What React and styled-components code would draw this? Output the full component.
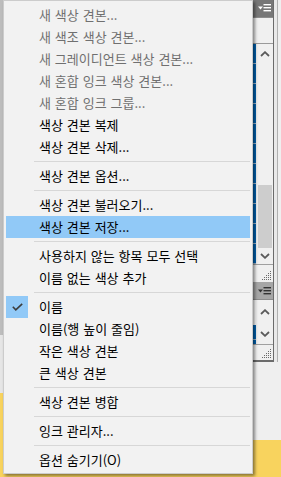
import styled, { createGlobalStyle } from 'styled-components'

const GlobalStyle = createGlobalStyle`
  html, body { margin: 0; padding: 0; }
  body { font-family: "Noto Sans CJK KR", "Noto Sans", sans-serif; }
`

const menuItems = [
  { label: '새 색상 견본...', disabled: true },
  { label: '새 색조 색상 견본...', disabled: true },
  { label: '새 그레이디언트 색상 견본...', disabled: true },
  { label: '새 혼합 잉크 색상 견본...', disabled: true },
  { label: '새 혼합 잉크 그룹...', disabled: true },
  { label: '색상 견본 복제' },
  { label: '색상 견본 삭제...' },
  { sep: true },
  { label: '색상 견본 옵션...' },
  { sep: true },
  { label: '색상 견본 불러오기...' },
  { label: '색상 견본 저장...', active: true },
  { sep: true },
  { label: '사용하지 않는 항목 모두 선택' },
  { label: '이름 없는 색상 추가' },
  { sep: true },
  { label: '이름', checked: true },
  { label: '이름(행 높이 줄임)' },
  { label: '작은 색상 견본' },
  { label: '큰 색상 견본' },
  { sep: true },
  { label: '색상 견본 병합' },
  { sep: true },
  { label: '잉크 관리자...' },
  { sep: true },
  { label: '옵션 숨기기(O)' },
]

const PanelMenuIcon = ({ color }) => (
  <svg width="13" height="8" viewBox="0 0 13 8">
    <path d="M0 2.5 H5 L2.5 5.5 Z" fill={color} />
    <rect x="5.5" y="0" width="7.5" height="1.4" fill={color} />
    <rect x="5.5" y="3" width="7.5" height="1.4" fill={color} />
    <rect x="5.5" y="6" width="7.5" height="1.4" fill={color} />
  </svg>
)

const Chevron = ({ up }) => (
  <svg width="10" height="6" viewBox="0 0 10 6">
    <polyline
      points={up ? '1,5 5,1.2 9,5' : '1,1 5,4.8 9,1'}
      fill="none"
      stroke="#5a5a5a"
      strokeWidth="1.8"
    />
  </svg>
)

const Grip = () => (
  <svg width="10" height="9" viewBox="0 0 10 9">
    {[[8, 0], [6, 2], [8, 2], [4, 4], [6, 4], [8, 4], [2, 6], [4, 6], [6, 6], [8, 6], [0, 8], [2, 8], [4, 8], [6, 8], [8, 8]].map(([x, y]) => (
      <rect key={`${x}-${y}`} x={x} y={y} width="1" height="1" fill="#6a6a6a" />
    ))}
  </svg>
)

const Check = () => (
  <svg width="11" height="8" viewBox="0 0 11 8">
    <polyline points="0.8,3.8 3.8,6.8 10.2,0.8" fill="none" stroke="#3c3c3c" strokeWidth="1.6" />
  </svg>
)

const App = () => {
  return (
    <>
      <GlobalStyle />
      <Desk>
        <Side>
          <Slab $h={335} $bg="#bdbdbd" />
          <Slab $h={58} $bg="#e6e6e6" />
          <Slab $bg="#f8d35e" />
        </Side>

        <Side>
          <PanelFrame>
            <PanelStack>
              <PanelHeader $bg="#777777">
                <PanelMenuIcon color="#ffffff" />
              </PanelHeader>
              <TopControls />
              <ListPane $h={221}>
                <SwatchStrip $whiteTop={0} />
                <ScrollCol>
                  <ScrollBtn $h={20}><Chevron up /></ScrollBtn>
                  <Track $thumb={63} />
                  <ScrollBtn $h={16}><Chevron /></ScrollBtn>
                </ScrollCol>
              </ListPane>
              <GripBar $h={18}><Grip /></GripBar>
              <PanelHeader $bg="#a6a6a6">
                <PanelMenuIcon color="#333333" />
              </PanelHeader>
              <ListPane $h={44}>
                <SwatchStrip $whiteTop={25} />
                <ScrollCol>
                  <ScrollBtn $h={24}><Chevron up /></ScrollBtn>
                  <ScrollBtn $h={20}><Chevron /></ScrollBtn>
                </ScrollCol>
              </ListPane>
              <GripBar $h={16}><Grip /></GripBar>
            </PanelStack>
            <Rule $c="#6b6b6b" />
            <Rule $c="#e9e9e9" $w={3} />
            <Rule $c="#b0b0b0" />
            <Rule $c="#efefef" $w={3} />
          </PanelFrame>
          <Slab $h={78} $bg="#efefef" />
          <Slab $bg="#f8d35e" />
        </Side>

        <Menu>
          {menuItems.map((item, i) =>
            item.sep ? (
              <Separator key={i} />
            ) : (
              <Item key={i} $disabled={item.disabled} $active={item.active}>
                <CheckCell $on={item.checked}>{item.checked && <Check />}</CheckCell>
                <Label>{item.label}</Label>
              </Item>
            )
          )}
        </Menu>
      </Desk>
    </>
  )
}

export default App

const Desk = styled.div`
  position: relative;
  width: 281px;
  height: 477px;
  overflow: hidden;
  display: grid;
  grid-template-columns: 253px 28px;
`

const Side = styled.div`
  display: flex;
  flex-direction: column;
`

const Slab = styled.div`
  height: ${p => (p.$h ? `${p.$h}px` : 'auto')};
  flex: ${p => (p.$h ? 'none' : 1)};
  background: ${p => p.$bg};
`

const PanelFrame = styled.div`
  height: 362px;
  display: flex;
`

const PanelStack = styled.div`
  width: 20px;
  display: flex;
  flex-direction: column;
  background: #f0f0f0;
  border-bottom: 2px solid #6b6b6b;
`

const Rule = styled.div`
  width: ${p => p.$w || 1}px;
  background: ${p => p.$c};
`

const PanelHeader = styled.div`
  height: 17px;
  background: ${p => p.$bg};
  border-bottom: 1px solid #8c8c8c;
  display: flex;
  align-items: center;
  justify-content: center;
  padding-left: 2px;
`

const TopControls = styled.div`
  height: 25px;
  background: #f0f0f0;
  border-bottom: 1px solid #9a9a9a;
`

const ListPane = styled.div`
  height: ${p => p.$h}px;
  display: grid;
  grid-template-columns: 3px 17px;
`

const SwatchStrip = styled.div`
  background:
    linear-gradient(#ffffff, #ffffff) top / 100% ${p => p.$whiteTop}px no-repeat,
    repeating-linear-gradient(#0062b0 0 19px, #9fb8d0 19px 20px);
`

const ScrollCol = styled.div`
  display: flex;
  flex-direction: column;
  background: #f0f0f0;
`

const ScrollBtn = styled.div`
  height: ${p => p.$h}px;
  display: flex;
  align-items: center;
  justify-content: center;
`

const Track = styled.div`
  flex: 1;
  display: flex;
  flex-direction: column;
  justify-content: flex-end;
  padding: 0 1px 0 2px;

  &::after {
    content: '';
    height: ${p => p.$thumb}px;
    background: #cdcdcd;
  }
`

const GripBar = styled.div`
  height: ${p => p.$h}px;
  border-top: 1px solid #a0a0a0;
  box-sizing: border-box;
  display: flex;
  align-items: flex-end;
  justify-content: flex-end;
  padding: 0 1px 2px 0;
`

const Menu = styled.div`
  position: absolute;
  left: 3px;
  top: 0;
  width: 250px;
  box-sizing: border-box;
  padding: 3px 2px 2px;
  background: #f2f2f2;
  border: 1px solid #cccccc;
  box-shadow: 2px 2px 3px rgba(0, 0, 0, 0.45);
`

const Item = styled.div`
  height: 22px;
  display: grid;
  grid-template-columns: 22px 1fr;
  column-gap: 11px;
  align-items: center;
  background: ${p => (p.$active ? '#91c9f7' : 'transparent')};
  color: ${p => (p.$disabled ? '#707070' : '#000000')};
`

const CheckCell = styled.div`
  height: 22px;
  display: flex;
  align-items: center;
  justify-content: center;
  background: ${p => (p.$on ? '#91c9f7' : 'transparent')};
`

const Label = styled.span`
  font-size: 13px;
  word-spacing: 1px;
  line-height: 22px;
  white-space: nowrap;
`

const Separator = styled.div`
  height: 1px;
  margin: 3px 0 3px 28px;
  background: #d7d7d7;
`
